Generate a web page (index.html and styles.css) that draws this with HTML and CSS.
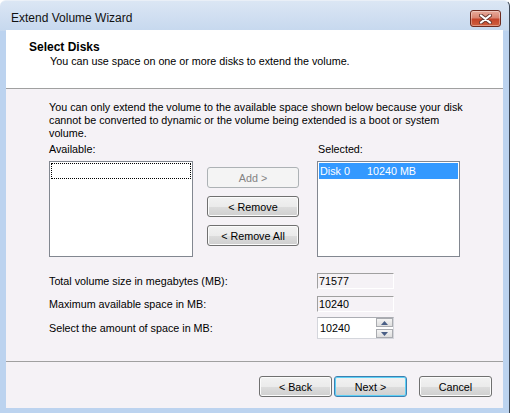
FILE: index.html
```html
<!DOCTYPE html>
<html>
<head>
<meta charset="utf-8">
<link rel="stylesheet" href="styles.css">
</head>
<body>
<div class="screen">
  <div class="window">
    <div class="titlebar">
      <span class="title">Extend Volume Wizard</span>
      <div class="close">
        <svg width="13" height="10" viewBox="0 0 13 10">
          <path d="M2 1.5 L11 8.5 M11 1.5 L2 8.5" stroke="#6a3a32" stroke-width="4" stroke-linecap="round" fill="none"/>
          <path d="M2 1.5 L11 8.5 M11 1.5 L2 8.5" stroke="#ffffff" stroke-width="2.2" stroke-linecap="round" fill="none"/>
        </svg>
      </div>
    </div>
    <div class="client">
      <div class="header">
        <div class="h-title">Select Disks</div>
        <div class="h-sub">You can use space on one or more disks to extend the volume.</div>
      </div>
      <div class="body">
        <p class="note">You can only extend the volume to the available space shown below because your disk<br>cannot be converted to dynamic or the volume being extended is a boot or system<br>volume.</p>
        <div class="picker">
          <div class="lbl">Available:</div>
          <div class="lbl right">Selected:</div>
          <div class="list"><div class="focus"></div></div>
          <div class="actions">
            <button class="btn small disabled">Add &gt;</button>
            <button class="btn small">&lt; Remove</button>
            <button class="btn small">&lt; Remove All</button>
          </div>
          <div class="list"><div class="item"><span class="disk">Disk 0</span><span>10240 MB</span></div></div>
        </div>
        <div class="fields">
          <div class="frow">
            <span class="flabel">Total volume size in megabytes (MB):</span>
            <div class="ro">71577</div>
          </div>
          <div class="frow">
            <span class="flabel">Maximum available space in MB:</span>
            <div class="ro">10240</div>
          </div>
          <div class="frow spinrow">
            <span class="flabel">Select the amount of space in MB:</span>
            <div class="spin">
              <span class="spin-val">10240</span>
              <div class="spin-btns">
                <div class="sb"><svg width="7" height="4" viewBox="0 0 7 4"><path d="M3.5 0 L7 4 L0 4 Z" fill="#4a5f86"/></svg></div>
                <div class="sb"><svg width="7" height="4" viewBox="0 0 7 4"><path d="M0 0 L7 0 L3.5 4 Z" fill="#4a5f86"/></svg></div>
              </div>
            </div>
          </div>
        </div>
      </div>
      <div class="footer">
        <button class="btn">&lt; Back</button>
        <button class="btn default">Next &gt;</button>
        <button class="btn cancel">Cancel</button>
      </div>
    </div>
  </div>
</div>
</body>
</html>
```

FILE: styles.css
```css
html, body {
  margin: 0;
  padding: 0;
}
body {
  font-family: "Liberation Sans", Arial, sans-serif;
  font-size: 10.75px;
  color: #000;
  background: #ffffff;
}
.screen {
  width: 512px;
  height: 413px;
  overflow: hidden;
  display: flex;
}
.window {
  flex: none;
  width: 509px;
  height: 413px;
  background: linear-gradient(#dbe6f4 0px, #c6d8ee 30px, #bcd3ef 30px);
  border-right: 1px solid #3c4756;
  border-top: 1px solid #e9eff7;
  box-sizing: content-box;
  border-top-left-radius: 6px;
  border-top-right-radius: 6px;
  display: flex;
  flex-direction: column;
}
.titlebar {
  flex: none;
  height: 29px;
  display: flex;
  justify-content: space-between;
  align-items: flex-start;
  padding: 0 8px 0 11px;
  box-sizing: border-box;
}
.title {
  font-size: 12px;
  line-height: 16px;
  margin-top: 9px;
  color: #111;
}
.close {
  margin-top: 9px;
  width: 31px;
  height: 17px;
  box-sizing: border-box;
  border: 1px solid #6d2b20;
  border-radius: 3px;
  background: linear-gradient(#e8ab9c 0%, #d98572 45%, #c4442a 55%, #d0603f 100%);
  box-shadow: inset 0 0 0 1px rgba(255, 255, 255, 0.35);
  display: flex;
  align-items: center;
  justify-content: center;
}
.client {
  flex: 1;
  margin: 0 6px 6px;
  background: #f5f2f6;
  display: flex;
  flex-direction: column;
}
.header {
  flex: none;
  height: 59px;
  box-sizing: border-box;
  background: #ffffff;
  border-bottom: 1px solid #a0a0a0;
  padding: 10px 0 0 23px;
}
.h-title {
  font-weight: bold;
  font-size: 12px;
  line-height: 14px;
}
.h-sub {
  margin-left: 21px;
  line-height: 14px;
}
.body {
  flex: 1;
  padding: 12px 0 0 43px;
}
.note {
  margin: 0 0 3px;
  line-height: 13px;
  white-space: nowrap;
}
.picker {
  display: grid;
  grid-template-columns: 144px 124px 143px;
  row-gap: 5px;
}
.lbl {
  line-height: 13px;
}
.lbl.right {
  grid-column: 3;
  padding-left: 1px;
}
.list {
  height: 96px;
  box-sizing: border-box;
  background: #ffffff;
  border: 1px solid #828790;
  padding: 1px;
}
.focus {
  height: 16px;
  box-sizing: border-box;
  border: 1px dotted #000;
}
.item {
  height: 16px;
  line-height: 16px;
  background: #3399ff;
  color: #ffffff;
  display: flex;
  padding-left: 1px;
}
.disk {
  width: 47px;
}
.actions {
  display: flex;
  flex-direction: column;
  gap: 8px;
  padding: 6px 0 0 14px;
}
.fields {
  margin-top: 16px;
}
.frow {
  display: flex;
  align-items: center;
  height: 16px;
}
.frow + .frow {
  margin-top: 7px;
}
.frow.spinrow {
  height: 22px;
  margin-top: 5px;
}
.flabel {
  width: 268px;
}
.ro {
  width: 77px;
  height: 16px;
  box-sizing: border-box;
  border: 1px solid;
  border-color: #a0a0a0 #ffffff #ffffff #a0a0a0;
  line-height: 14px;
  padding-left: 1px;
}
.spin {
  width: 77px;
  height: 22px;
  box-sizing: border-box;
  border: 1px solid #d4d6dc;
  border-top-color: #abadb3;
  background: #ffffff;
  display: flex;
  align-items: center;
  justify-content: space-between;
  padding-left: 2px;
}
.spin-btns {
  display: flex;
  flex-direction: column;
  gap: 2px;
}
.sb {
  width: 17px;
  height: 9px;
  box-sizing: border-box;
  border: 1px solid #a9abb0;
  background: linear-gradient(#f4f4f4, #dedede);
  display: flex;
  align-items: center;
  justify-content: center;
}
.footer {
  flex: none;
  height: 47px;
  box-sizing: border-box;
  border-top: 1px solid #a0a0a0;
  display: flex;
  justify-content: flex-end;
  gap: 2px;
  padding: 14px 11px 0 0;
}
.btn {
  width: 73px;
  height: 21px;
  box-sizing: border-box;
  padding: 0;
  border: 1px solid #707070;
  border-radius: 3px;
  background: linear-gradient(#f2f2f2 0%, #ebebeb 50%, #dddddd 50%, #cfcfcf 100%);
  box-shadow: inset 0 0 0 1px #fbfbfb;
  font-family: "Liberation Sans", Arial, sans-serif;
  font-size: 10.75px;
  color: #000;
}
.btn.small {
  width: 92px;
}
.btn.disabled {
  border-color: #adb2b5;
  background: #f4f4f4;
  box-shadow: none;
  color: #838383;
}
.btn.default {
  border-color: #3c7fb1;
  box-shadow: inset 0 0 0 1px #5ed0f5;
}
.btn.cancel {
  margin-left: 10px;
}
```
